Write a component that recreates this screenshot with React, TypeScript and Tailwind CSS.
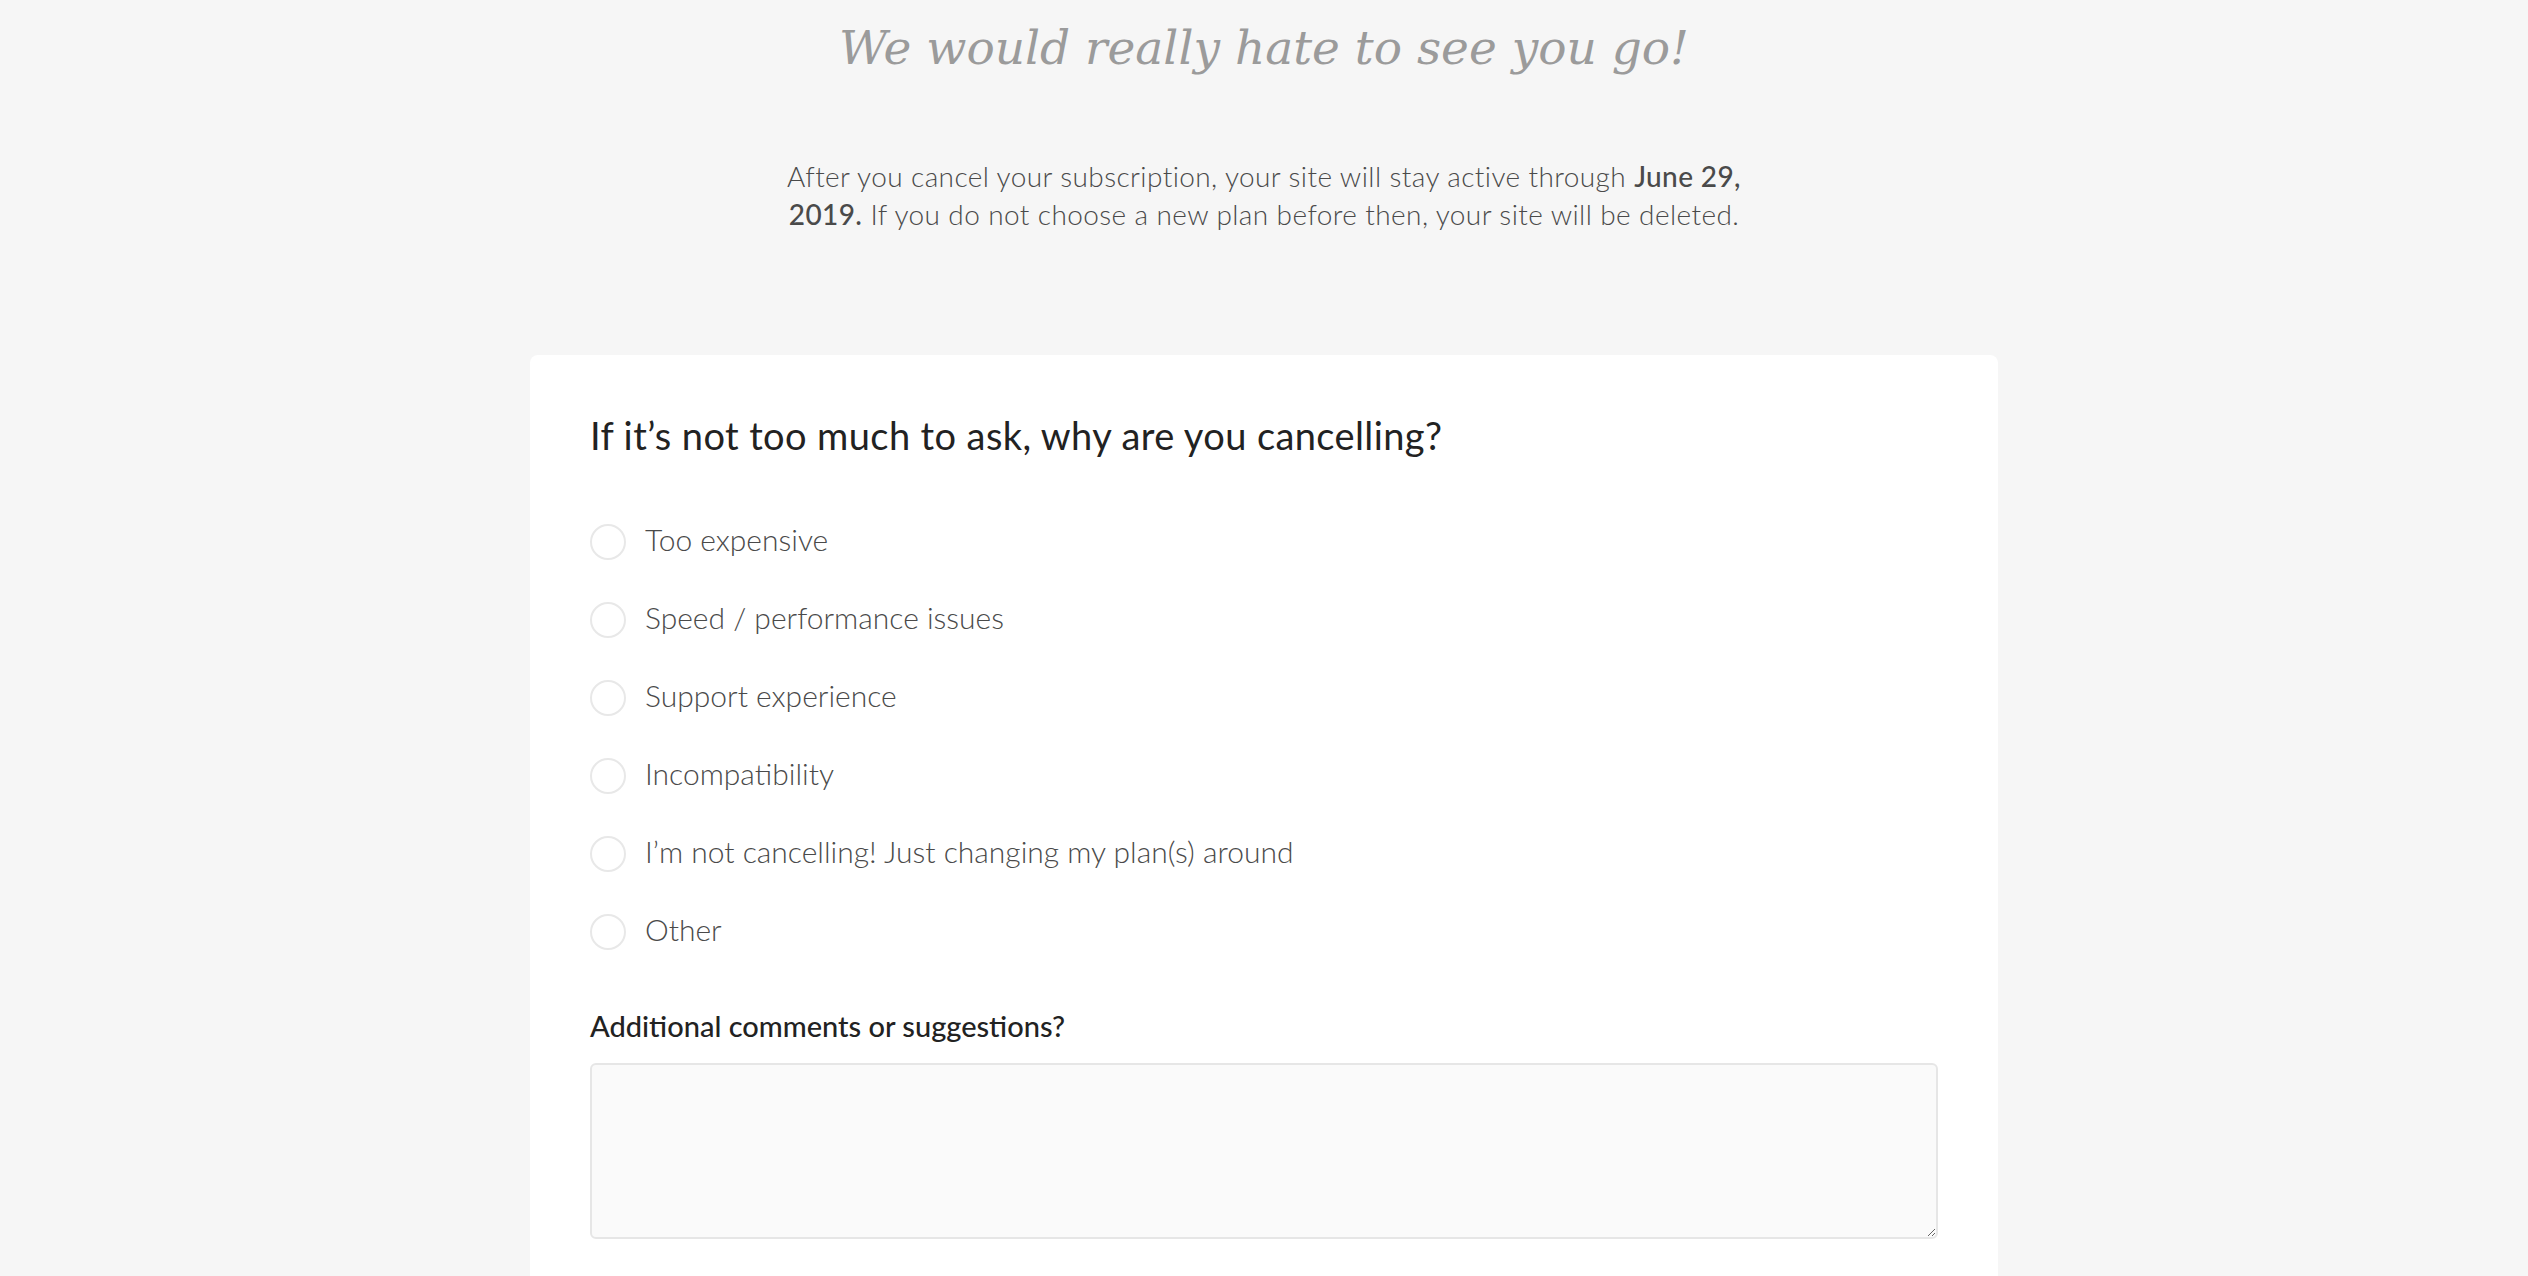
import { useState } from "react";

const reasons = [
  "Too expensive",
  "Speed / performance issues",
  "Support experience",
  "Incompatibility",
  "I’m not cancelling! Just changing my plan(s) around",
  "Other",
];

function Radio({ label, checked, onPick }: { label: string; checked: boolean; onPick: () => void }) {
  return (
    <label className="flex h-[36px] cursor-pointer items-center gap-[19px]" onClick={onPick}>
      <span
        className={`flex size-[36px] shrink-0 items-center justify-center rounded-full border-2 bg-white ${
          checked ? "border-[#555]" : "border-[#e8e8e8]"
        }`}
      >
        {checked && <span className="size-[16px] rounded-full bg-[#555]" />}
      </span>
      <span className="mb-[7px] text-[30px] font-light leading-[30px] text-[#4a4a4a]">{label}</span>
    </label>
  );
}

export default function App() {
  const [picked, setPicked] = useState<number | null>(null);

  return (
    <div
      className="flex min-h-screen flex-col items-center bg-[#f6f6f6] pb-16"
      style={{ fontFamily: "Lato, 'Open Sans', sans-serif" }}
    >
      <h1
        className="pt-[22px] text-[47px] italic leading-[52px] text-[#9b9b9b]"
        style={{ fontFamily: "'DejaVu Serif', 'Liberation Serif', serif" }}
      >
        We would really hate to see you go!
      </h1>

      <p className="mt-[83px] w-[1000px] text-center text-[28px] font-light leading-[38px] tracking-[0.4px] text-[#4a4a4a]">
        After you cancel your subscription, your site will stay active through{" "}
        <span className="font-medium">June 29,</span> <span className="font-medium">2019.</span> If you do not
        choose a new plan before then, your site will be deleted.
      </p>

      <section className="mt-[122px] w-[1468px] rounded-[8px] bg-white px-[60px] pb-[60px] pt-[58px]">
        <h2 className="text-[38px] font-normal leading-[44px] tracking-[0.4px] text-[#222]">
          If it’s not too much to ask, why are you cancelling?
        </h2>

        <div className="mt-[67px] flex flex-col gap-[42px]">
          {reasons.map((r, i) => (
            <Radio key={r} label={r} checked={picked === i} onPick={() => setPicked(i)} />
          ))}
        </div>

        <div className="mt-[58px] text-[29px] font-medium leading-[36px] text-[#222]">
          Additional comments or suggestions?
        </div>
        <textarea className="mt-[19px] block h-[176px] w-full resize-y rounded-[6px] border-2 border-[#e6e6e6] bg-[#fafafa] p-4 text-[26px] text-[#555] outline-none" />
      </section>
    </div>
  );
}
